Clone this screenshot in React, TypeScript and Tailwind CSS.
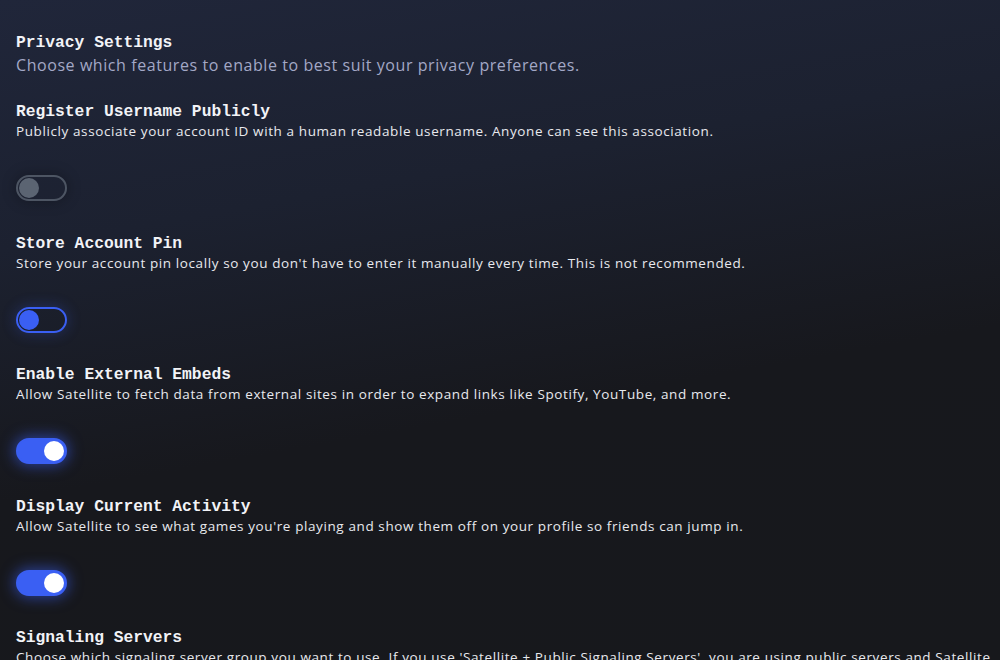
import React, { useState } from 'react'

type Mode = 'off' | 'half' | 'on'

interface Setting {
  title: string
  description: string
  mode?: Mode
}

const settings: Setting[] = [
  {
    title: 'Register Username Publicly',
    description:
      'Publicly associate your account ID with a human readable username. Anyone can see this association.',
    mode: 'off',
  },
  {
    title: 'Store Account Pin',
    description:
      "Store your account pin locally so you don't have to enter it manually every time. This is not recommended.",
    mode: 'half',
  },
  {
    title: 'Enable External Embeds',
    description:
      'Allow Satellite to fetch data from external sites in order to expand links like Spotify, YouTube, and more.',
    mode: 'on',
  },
  {
    title: 'Display Current Activity',
    description:
      "Allow Satellite to see what games you're playing and show them off on your profile so friends can jump in.",
    mode: 'on',
  },
  {
    title: 'Signaling Servers',
    description:
      "Choose which signaling server group you want to use. If you use 'Satellite + Public Signaling Servers', you are using public servers and Satellite hosted servers to connect with peers. Public servers may log your IP address.",
  },
]

const mono = "font-['Liberation_Mono',monospace]"
const sans = "font-['Open_Sans','Liberation_Sans',sans-serif]"

const Toggle: React.FC<{ initial: Mode }> = ({ initial }) => {
  const [mode, setMode] = useState<Mode>(initial)
  const on = mode === 'on'

  const track =
    mode === 'on'
      ? 'bg-[#3a5ff3] border-[#3a5ff3] shadow-[0_0_14px_2px_rgba(58,95,243,0.55)]'
      : mode === 'half'
        ? 'bg-transparent border-[#3a5ff3] shadow-[0_0_14px_1px_rgba(58,95,243,0.25)]'
        : 'bg-transparent border-[#4d5563] shadow-[0_0_14px_1px_rgba(0,0,0,0.25)]'
  const knob = on ? 'bg-white translate-x-[25px]' : mode === 'half' ? 'bg-[#3a5ff3]' : 'bg-[#5b6472]'

  return (
    <button
      type="button"
      onClick={() => setMode(on ? 'off' : 'on')}
      className={`relative flex h-[26px] w-[51px] items-center rounded-full border-2 px-[1px] ${track}`}
    >
      <span className={`block h-[20px] w-[20px] rounded-full transition-transform ${knob}`} />
    </button>
  )
}

export default function App() {
  return (
    <div className="h-[660px] w-[1000px] overflow-hidden bg-[linear-gradient(170deg,#20263a_0%,#1c2130_30%,#17181d_60%,#17181c_100%)] text-white">
      <div className="pl-4 pt-[29px]">
        <h1 className={`${mono} pt-[4px] text-[16.3px] font-bold leading-[20px] text-[#f2f3f7]`}>
          Privacy Settings
        </h1>
        <p className={`${sans} pt-[1px] text-[16px] leading-[23px] tracking-[0.57px] text-[#a3a8c6]`}>
          Choose which features to enable to best suit your privacy preferences.
        </p>

        <div className="mt-[22px] flex flex-col gap-[29.5px]">
          {settings.map((s) => (
            <div key={s.title} className="flex flex-col">
              <h2 className={`${mono} pt-[4px] text-[16.3px] font-bold leading-[18px] text-[#f2f3f7]`}>
                {s.title}
              </h2>
              <p className={`${sans} text-[13.5px] leading-5 tracking-[0.6px] text-[#e8e9ee]`}>
                {s.description}
              </p>
              {s.mode && (
                <div className="mt-[34px]">
                  <Toggle initial={s.mode} />
                </div>
              )}
            </div>
          ))}
        </div>
      </div>
    </div>
  )
}
